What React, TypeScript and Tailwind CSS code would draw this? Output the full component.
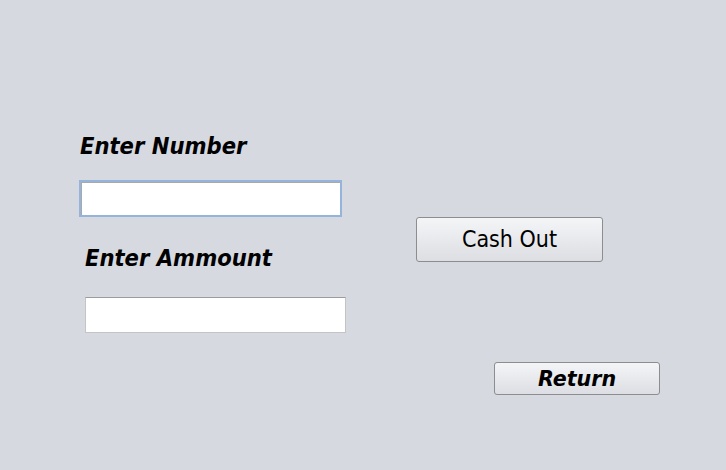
import React from "react";

const condensed = {
  fontFamily: '"DejaVu Sans Condensed", "DejaVu Sans", sans-serif',
};
const normal = {
  fontFamily: '"DejaVu Sans", sans-serif',
};

export default function App() {
  return (
    <div
      className="w-[726px] h-[470px] bg-[#d6d9e0] flex text-black overflow-hidden"
      style={condensed}
    >
      <div className="w-[416px] flex flex-col pt-[133px]">
        <div className="ml-[80px] h-[26px] leading-[26px] text-[23.5px] font-bold italic">
          Enter Number
        </div>
        <div className="ml-[79px] mt-[21px] w-[263px] h-[37px] bg-white border-2 border-[#94b4db] shadow-[inset_1px_1px_0_#a9a9a9]" />
        <div className="ml-[85px] mt-[28px] h-[26px] leading-[26px] text-[23.5px] font-bold italic">
          Enter Ammount
        </div>
        <div className="ml-[85px] mt-[26px] w-[261px] h-[36px] bg-white border border-[#c4c4c4] border-t-[#9c9c9c]" />
      </div>
      <div className="flex flex-col pt-[217px]">
        <button className="w-[187px] h-[45px] rounded-[3px] border border-[#8c8d8f] bg-gradient-to-b from-[#f4f5f7] to-[#dcdee3] text-[23px] leading-none text-black flex items-center justify-center">
          Cash Out
        </button>
        <button
          className="ml-[78px] mt-[100px] w-[166px] h-[33px] rounded-[3px] border border-[#8c8d8f] bg-gradient-to-b from-[#f4f5f7] to-[#dcdee3] text-[20.6px] font-bold italic leading-none text-black flex items-center justify-center pt-[2px]"
          style={normal}
        >
          Return
        </button>
      </div>
    </div>
  );
}
